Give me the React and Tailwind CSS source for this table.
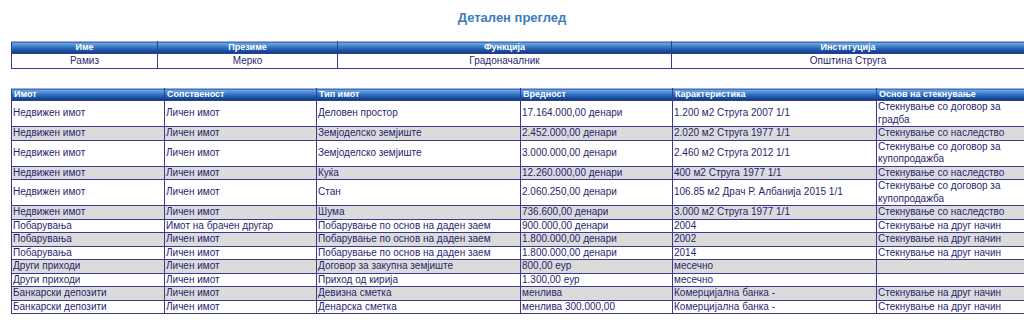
import React from 'react';

const person = { ime: 'Рамиз', prezime: 'Мерко', funkcija: 'Градоначалник', institucija: 'Општина Струга' };

const rows = [
  ['Недвижен имот', 'Личен имот', 'Деловен простор', '17.164.000,00 денари', '1.200 м2 Струга 2007 1/1', 'Стекнување со договор за градба'],
  ['Недвижен имот', 'Личен имот', 'Земјоделско земјиште', '2.452.000,00 денари', '2.020 м2 Струга 1977 1/1', 'Стекнување со наследство'],
  ['Недвижен имот', 'Личен имот', 'Земјоделско земјиште', '3.000.000,00 денари', '2.460 м2 Струга 2012 1/1', 'Стекнување со договор за купопродажба'],
  ['Недвижен имот', 'Личен имот', 'Куќа', '12.260.000,00 денари', '400 м2 Струга 1977 1/1', 'Стекнување со наследство'],
  ['Недвижен имот', 'Личен имот', 'Стан', '2.060.250,00 денари', '106.85 м2 Драч Р. Албанија 2015 1/1', 'Стекнување со договор за купопродажба'],
  ['Недвижен имот', 'Личен имот', 'Шума', '736.600,00 денари', '3.000 м2 Струга 1977 1/1', 'Стекнување со наследство'],
  ['Побарувања', 'Имот на брачен другар', 'Побарување по основ на даден заем', '900.000,00 денари', '2004', 'Стекнување на друг начин'],
  ['Побарувања', 'Личен имот', 'Побарување по основ на даден заем', '1.800.000,00 денари', '2002', 'Стекнување на друг начин'],
  ['Побарувања', 'Личен имот', 'Побарување по основ на даден заем', '1.800.000,00 денари', '2014', 'Стекнување на друг начин'],
  ['Други приходи', 'Личен имот', 'Договор за закупна земјиште', '800,00 еур', 'месечно', ''],
  ['Други приходи', 'Личен имот', 'Приход од кирија', '1.300,00 еур', 'месечно', ''],
  ['Банкарски депозити', 'Личен имот', 'Девизна сметка', 'менлива', 'Комерцијална банка -', 'Стекнување на друг начин'],
  ['Банкарски депозити', 'Личен имот', 'Денарска сметка', 'менлива 300.000,00', 'Комерцијална банка -', 'Стекнување на друг начин'],
];

const headCell =
  'border border-[#3a3a94] border-t-[#a9a9e6] bg-gradient-to-b from-[#74aeea] via-[#2c6cbc] to-[#0a3883] text-white font-bold text-[9px] leading-[11px] px-[2px] py-0';
const bodyCell = 'border border-[#3a3a94] px-[1px] py-0 align-middle';

const App = () => {
  return (
    <div className="w-[1024px] h-[323px] overflow-hidden bg-white font-['Liberation_Sans',Arial,sans-serif] text-[#2a1f6e]">
      <h1 className="pt-[10px] text-center text-[13px] leading-[15px] font-bold text-[#3b7cc0]">Детален преглед</h1>

      {/* Basic info */}
      <div className="mt-[16px] ml-[11px]">
        <table className="w-[1014px] table-fixed border-collapse text-[10px] leading-[12px]">
          <colgroup>
            <col className="w-[146px]" />
            <col className="w-[180px]" />
            <col className="w-[334px]" />
            <col />
          </colgroup>
          <thead>
            <tr>
              <th className={headCell + ' text-center'}>Име</th>
              <th className={headCell + ' text-center'}>Презиме</th>
              <th className={headCell + ' text-center'}>Функција</th>
              <th className={headCell + ' text-center'}>Институција</th>
            </tr>
          </thead>
          <tbody>
            <tr>
              <td className={bodyCell + ' text-center py-[1px]'}>{person.ime}</td>
              <td className={bodyCell + ' text-center py-[1px]'}>{person.prezime}</td>
              <td className={bodyCell + ' text-center py-[1px]'}>{person.funkcija}</td>
              <td className={bodyCell + ' text-center py-[1px]'}>{person.institucija}</td>
            </tr>
          </tbody>
        </table>
      </div>

      {/* Property list */}
      <div className="mt-[19px] ml-[11px]">
        <table className="w-[1014px] table-fixed border-collapse text-[10px] leading-[12.5px]">
          <colgroup>
            <col className="w-[153px]" />
            <col className="w-[152px]" />
            <col className="w-[204px]" />
            <col className="w-[152px]" />
            <col className="w-[204px]" />
            <col />
          </colgroup>
          <thead>
            <tr>
              {['Имот', 'Сопственост', 'Тип имот', 'Вредност', 'Карактеристика', 'Основ на стекнување'].map((h) => (
                <th key={h} className={headCell + ' text-left'}>{h}</th>
              ))}
            </tr>
          </thead>
          <tbody>
            {rows.map((r, i) => (
              <tr key={i} className={i % 2 === 1 ? 'bg-[#dbdbdb]' : 'bg-white'}>
                {r.map((c, j) => (
                  <td key={j} className={bodyCell + ' text-left'}>
                    {c}
                  </td>
                ))}
              </tr>
            ))}
          </tbody>
        </table>
      </div>
    </div>
  );
};

export default App;
